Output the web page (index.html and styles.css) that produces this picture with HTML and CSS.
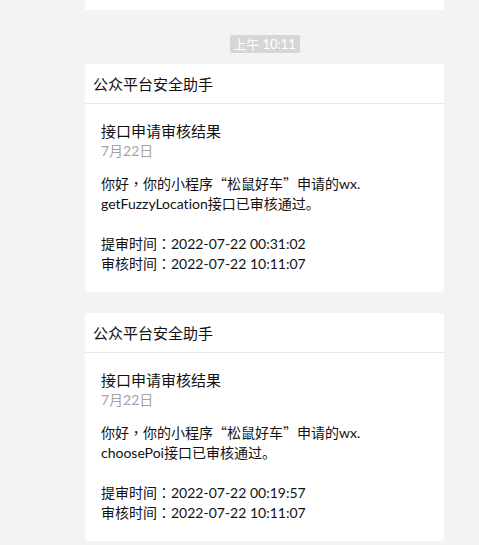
FILE: index.html
```html
<!DOCTYPE html>
<html lang="zh-CN">
<head>
<meta charset="utf-8">
<title>公众平台安全助手</title>
<link rel="stylesheet" href="styles.css">
</head>
<body>
<div class="chat">
  <div class="card card-cut"></div>
  <div class="time-row"><span class="time-pill">上午 10:11</span></div>
  <div class="card">
    <div class="card-head">公众平台安全助手</div>
    <div class="card-body">
      <div class="msg-title">接口申请审核结果</div>
      <div class="msg-date">7月22日</div>
      <div class="msg-text">你好<span class="pc" lang="zh-TW">，</span>你的小程序<span class="qt">“</span>松鼠好车<span class="qt">”</span>申请的wx.<br>getFuzzyLocation接口已审核通过。<br><br>提审时间<span class="pc" lang="zh-TW">：</span>2022-07-22 00:31:02<br>审核时间<span class="pc" lang="zh-TW">：</span>2022-07-22 10:11:07</div>
    </div>
  </div>
  <div class="card">
    <div class="card-head">公众平台安全助手</div>
    <div class="card-body">
      <div class="msg-title">接口申请审核结果</div>
      <div class="msg-date">7月22日</div>
      <div class="msg-text">你好<span class="pc" lang="zh-TW">，</span>你的小程序<span class="qt">“</span>松鼠好车<span class="qt">”</span>申请的wx.<br>choosePoi接口已审核通过。<br><br>提审时间<span class="pc" lang="zh-TW">：</span>2022-07-22 00:19:57<br>审核时间<span class="pc" lang="zh-TW">：</span>2022-07-22 10:11:07</div>
    </div>
  </div>
</div>
</body>
</html>
```

FILE: styles.css
```css
html, body {
  margin: 0;
  padding: 0;
  background: #f3f3f3;
}
body {
  font-family: Lato, "Noto Sans CJK SC", sans-serif;
  font-variant-ligatures: none;
  color: #191919;
  height: 545px;
  overflow: hidden;
}
.chat {
  display: flex;
  flex-direction: column;
  padding-left: 85px;
  width: 359px;
}
.card {
  background: #ffffff;
  border-radius: 3px;
  margin-bottom: 21px;
}
.card-cut {
  height: 10px;
  border-radius: 0 0 3px 3px;
  margin-bottom: 0;
}
.time-row {
  display: flex;
  justify-content: center;
  padding: 25px 0 11px 0;
}
.time-pill {
  display: block;
  width: 70px;
  height: 18px;
  line-height: 18px;
  text-align: center;
  font-size: 13px;
  color: #ffffff;
  background: #d6d6d6;
  border-radius: 2px;
}
.card-head {
  height: 39px;
  line-height: 41px;
  padding-left: 8px;
  font-size: 15px;
  color: #111111;
  border-bottom: 1px solid #e7e7e7;
}
.card-body {
  padding: 17px 16px 18px 16px;
}
.msg-title {
  font-size: 15px;
  line-height: 20px;
  color: #111111;
}
.msg-date {
  font-size: 14px;
  line-height: 20px;
  color: #a3a3a3;
}
.msg-text {
  margin-top: 13px;
  font-size: 14px;
  line-height: 20px;
  color: #111111;
}
.pc {
  font-family: "Noto Sans CJK TC", sans-serif;
  line-height: 14px;
}
.qt {
  font-family: "Noto Sans CJK SC", sans-serif;
  line-height: 14px;
}
```
